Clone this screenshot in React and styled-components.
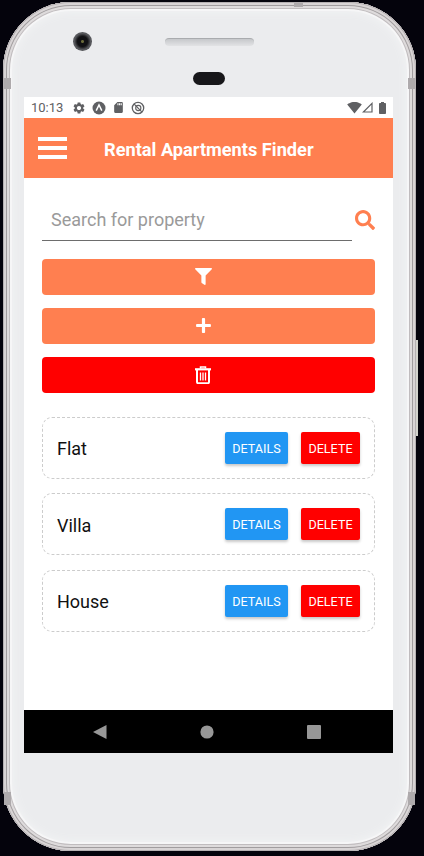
import React from "react";
import styled, { createGlobalStyle } from "styled-components";
import { FaFilter, FaPlus, FaSearch } from "react-icons/fa";
import { MdSettings, MdSdCard, MdSignalWifi4Bar } from "react-icons/md";

const GlobalStyle = createGlobalStyle`
  html, body {
    margin: 0;
    background: #04030c;
    font-family: Roboto, "Liberation Sans", sans-serif;
  }
  * { box-sizing: border-box; }
`;

const Page = styled.div`
  width: 424px;
  height: 856px;
  padding: 2px 0 0 3px;
  overflow: hidden;
`;

const Phone = styled.div`
  position: relative;
  width: 413px;
  height: 849px;
  border-radius: 68px;
  background: #ebecee;
  box-shadow: inset 0 0 0 1px #b5b0b2, inset 0 0 0 3px #d8d4d5, inset 0 0 0 4px #a09c9e,
    inset 0 0 0 6px #dedbdc, inset 0 0 0 7px #c0bcbe, inset 0 0 0 9px #f6f6f7,
    inset 0 0 8px 10px #f2f3f4;
`;

const SideKey = styled.span`
  position: absolute;
  right: -2px;
  top: 338px;
  width: 2px;
  height: 96px;
  background: #d3d3cd;
`;

// darker antenna bands cut into the metal edge
const Band = styled.span`
  position: absolute;
  top: ${(p) => p.$top}px;
  ${(p) => p.$side}: 1px;
  width: 7px;
  height: ${(p) => p.$height}px;
  background: #aeaaac;
`;

const TopBand = styled.span`
  position: absolute;
  top: 1px;
  left: 291px;
  width: 9px;
  height: 4px;
  background: #aeaaac;
`;

const Bezel = styled.div`
  height: 95px;
  padding: 30px 0 0 70px;
`;

const BezelRow = styled.div`
  display: flex;
  align-items: center;
  gap: 73px;
`;

const Camera = styled.div`
  width: 19px;
  height: 19px;
  border-radius: 50%;
  background: radial-gradient(circle at 50% 50%, #6b6a3a 0 1px, #111114 2px 5px, #242427 6px, #56575b 8px);
`;

const Speaker = styled.div`
  width: 89px;
  height: 8px;
  border-radius: 4px;
  border-top: 1px solid #a9abae;
  background: linear-gradient(#c6c8cb, #e2e3e5);
`;

const Sensor = styled.div`
  width: 32px;
  height: 13px;
  margin: 21px 0 0 120px;
  border-radius: 7px;
  background: #17171a;
`;

const Screen = styled.div`
  width: 369px;
  height: 656px;
  margin-left: 21px;
  background: #fff;
  display: flex;
  flex-direction: column;
`;

const StatusBar = styled.div`
  height: 21px;
  flex: none;
  padding: 0 7px;
  display: flex;
  align-items: center;
  color: #5f6063;
`;

const Clock = styled.span`
  width: 41px;
  font-size: 13px;
`;

const StatusIcons = styled.div`
  display: flex;
  align-items: center;
  gap: ${(p) => p.$gap}px;
  margin-left: ${(p) => (p.$right ? "auto" : "0")};
`;

const Header = styled.header`
  height: 60px;
  flex: none;
  background: #ff7f50;
  display: flex;
  align-items: center;
  padding-left: 14px;
`;

const Burger = styled.svg`
  width: 29px;
  height: 22px;
  flex: none;
`;

const Title = styled.h1`
  margin: 2px 0 0 37px;
  color: #fff;
  font-size: 18.2px;
  font-weight: 700;
`;

const Main = styled.main`
  flex: 1;
  padding: 21px 18px 0;
`;

const SearchRow = styled.div`
  display: flex;
  align-items: center;
  height: 42px;
`;

const SearchInput = styled.div`
  width: 310px;
  height: 42px;
  padding: 0 0 0 9px;
  border-bottom: 1px solid #6d6d6d;
  color: #9a9a9a;
  font-size: 18px;
  line-height: 42px;
`;

const SearchIcon = styled.span`
  margin-left: 3px;
  display: flex;
  color: #ff7f50;
  font-size: 20px;
`;

const Actions = styled.div`
  margin-top: 17.5px;
  display: flex;
  flex-direction: column;
  gap: 13.25px;
`;

const ActionButton = styled.button`
  width: 333px;
  height: 36px;
  padding: 0 11px 0 0;
  border: 0;
  border-radius: 4px;
  background: ${(p) => p.$color};
  color: #fff;
  font-size: 17px;
  display: flex;
  align-items: center;
  justify-content: center;
`;

const List = styled.div`
  margin-top: 23.5px;
  display: flex;
  flex-direction: column;
  gap: 14.6px;
`;

const Card = styled.div`
  width: 333px;
  height: 62px;
  padding: 0 14px;
  border: 1px dashed #cccccc;
  border-radius: 10px;
  display: flex;
  align-items: center;
`;

const CardName = styled.span`
  flex: 1;
  padding-top: 2px;
  font-size: 18px;
  color: #111;
`;

const CardButton = styled.button`
  width: ${(p) => p.$width}px;
  height: 32px;
  margin-left: ${(p) => p.$gap}px;
  padding: 1px 0 0;
  border: 0;
  border-radius: 2px;
  background: ${(p) => p.$color};
  color: #fff;
  font-family: inherit;
  font-size: 12.6px;
  font-weight: 400;
  box-shadow: 0 2px 3px rgba(0, 0, 0, 0.22);
`;

const NavBar = styled.div`
  height: 43px;
  flex: none;
  padding-right: 3px;
  background: #000;
  display: grid;
  grid-template-columns: repeat(3, 107px);
  justify-content: center;
  align-items: center;
  justify-items: center;
`;

const NavIcon = styled.svg`
  width: 14px;
  height: 14px;
`;

const properties = ["Flat", "Villa", "House"];

const App = () => {
  return (
    <Page>
      <GlobalStyle />
      <Phone>
        <SideKey />
        <TopBand />
        <Band $side="left" $top={76} $height={11} />
        <Band $side="right" $top={76} $height={11} />
        <Band $side="left" $top={790} $height={13} />
        <Band $side="right" $top={790} $height={13} />
        <Bezel>
          <BezelRow>
            <Camera />
            <Speaker />
          </BezelRow>
          <Sensor />
        </Bezel>
        <Screen>
          <StatusBar>
            <Clock>10:13</Clock>
            <StatusIcons $gap={6}>
              <MdSettings size={14} />
              <svg width="14" height="14" viewBox="0 0 14 14">
                <circle cx="7" cy="7" r="6.5" fill="#5f6063" />
                <path d="M4.2 9.6 7 4l2.8 5.6" fill="none" stroke="#fff" strokeWidth="1.5" />
              </svg>
              <MdSdCard size={13} />
              <svg width="14" height="14" viewBox="0 0 14 14" fill="none" stroke="#5f6063">
                <circle cx="7" cy="7" r="5.7" strokeWidth="1.3" />
                <circle cx="7.3" cy="7" r="2.6" strokeWidth="1.1" />
                <path d="M3.2 3.2 10.8 10.8" strokeWidth="1.2" />
              </svg>
            </StatusIcons>
            <StatusIcons $right $gap={0}>
              <MdSignalWifi4Bar size={15} />
              <svg width="11" height="11" viewBox="0 0 11 11" fill="none" stroke="#5f6063" strokeWidth="1.2">
                <path d="M10 1.4V10H1.4Z" />
              </svg>
              <svg width="7" height="12" viewBox="0 0 7 12" fill="#5f6063" style={{ marginLeft: 6 }}>
                <path d="M2 0h3v1h1.2c.4 0 .8.4.8.8v9.4c0 .4-.4.8-.8.8H.8c-.4 0-.8-.4-.8-.8V1.800c0-.4.4-.8.8-.8H2Z" />
              </svg>
            </StatusIcons>
          </StatusBar>
          <Header>
            <Burger viewBox="0 0 29 22" fill="#fff">
              <rect width="29" height="4" />
              <rect y="9" width="29" height="4" />
              <rect y="18" width="29" height="4" />
            </Burger>
            <Title>Rental Apartments Finder</Title>
          </Header>
          <Main>
            <SearchRow>
              <SearchInput>Search for property</SearchInput>
              <SearchIcon>
                <FaSearch />
              </SearchIcon>
            </SearchRow>
            <Actions>
              <ActionButton $color="#ff7f50">
                <FaFilter />
              </ActionButton>
              <ActionButton $color="#ff7f50">
                <FaPlus />
              </ActionButton>
              <ActionButton $color="#ff0000">
                <svg width="16" height="18" viewBox="0 0 16 18" fill="none" stroke="#fff">
                  <path d="M5.500 2.500V1h5v1.500" strokeWidth="1.500" />
                  <path d="M0 3.300h16" strokeWidth="2.200" />
                  <path d="M2 4v12c0 .8.5 1.200 1.200 1.200h9.600c.7 0 1.200-.4 1.200-1.200V4" strokeWidth="2" />
                  <path d="M5.500 6.500v8M8 6.500v8M10.500 6.500v8" strokeWidth="1.300" />
                </svg>
              </ActionButton>
            </Actions>
            <List>
              {properties.map((name) => (
                <Card key={name}>
                  <CardName>{name}</CardName>
                  <CardButton $width={63} $gap={0} $color="#2196f3">
                    DETAILS
                  </CardButton>
                  <CardButton $width={59} $gap={13} $color="#ff0000">
                    DELETE
                  </CardButton>
                </Card>
              ))}
            </List>
          </Main>
          <NavBar>
            <NavIcon viewBox="0 0 14 14" fill="#979797">
              <path d="M13.500 0V14L0 7Z" />
            </NavIcon>
            <NavIcon viewBox="0 0 14 14" fill="#979797">
              <circle cx="7" cy="7" r="6.600" />
            </NavIcon>
            <NavIcon viewBox="0 0 14 14" fill="#979797">
              <rect width="14" height="14" rx="1" />
            </NavIcon>
          </NavBar>
        </Screen>
      </Phone>
    </Page>
  );
};

export default App;
